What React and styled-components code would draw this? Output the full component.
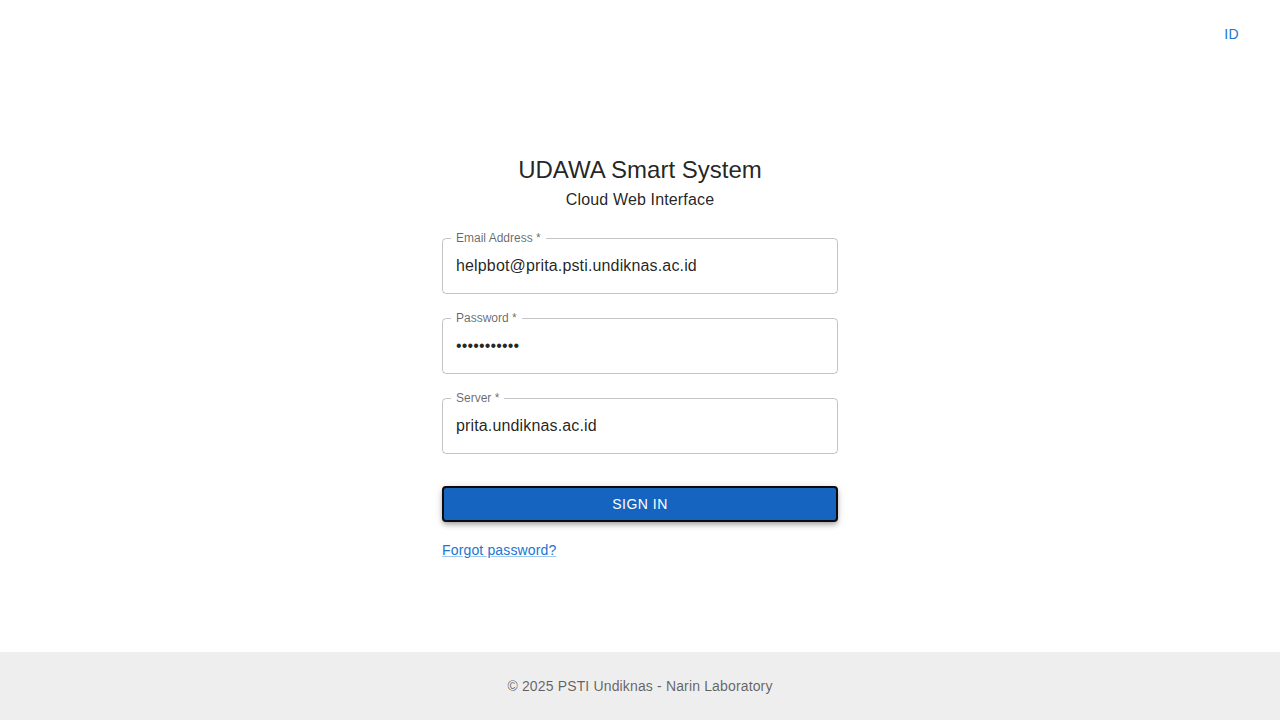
import React from "react"
import styled, { createGlobalStyle } from "styled-components"

const GlobalStyle = createGlobalStyle`
  html, body {
    margin: 0;
    padding: 0;
    background: #fff;
    font-family: "Liberation Sans", Arial, sans-serif;
    color: rgba(0, 0, 0, 0.87);
  }
  * {
    box-sizing: border-box;
  }
`

const Page = styled.div`
  min-height: 100vh;
  display: flex;
  flex-direction: column;
`

const Header = styled.header`
  height: 68px;
  display: flex;
  justify-content: flex-end;
  align-items: flex-start;
  padding: 24px 41px 0 0;
`

const LangButton = styled.button`
  border: none;
  background: none;
  padding: 0;
  font-family: inherit;
  font-size: 14px;
  line-height: 20px;
  letter-spacing: 0.4px;
  color: #1976d2;
  cursor: pointer;
`

const Main = styled.main`
  flex: 1;
  display: flex;
  justify-content: center;
  padding-top: 86px;
`

const Card = styled.div`
  width: 396px;
  display: flex;
  flex-direction: column;
`

const Title = styled.h1`
  margin: 0;
  font-size: 24px;
  font-weight: 400;
  line-height: 32px;
  text-align: center;
`

const SubTitle = styled.p`
  margin: 2px 0 20px;
  font-size: 16px;
  line-height: 24px;
  letter-spacing: 0.15px;
  text-align: center;
`

const Form = styled.form`
  display: flex;
  flex-direction: column;
  gap: 18px;
`

const Field = styled.fieldset`
  margin: 0;
  padding: 0 13px 5px;
  border: 1px solid rgba(0, 0, 0, 0.23);
  border-radius: 4px;
  min-width: 0;

  legend {
    margin-left: -5px;
    padding: 0 5px;
    font-size: 12px;
    line-height: 12px;
    color: rgba(0, 0, 0, 0.6);
  }

  input {
    display: block;
    width: 100%;
    height: 44px;
    border: none;
    outline: none;
    padding: 0;
    background: transparent;
    font-family: inherit;
    font-size: 16px;
    letter-spacing: 0.15px;
    color: rgba(0, 0, 0, 0.87);
  }
`

const SignIn = styled.button`
  margin-top: 14px;
  height: 36px;
  width: 100%;
  border: 2px solid #0b0b0b;
  border-radius: 4px;
  background: #1565c0;
  color: #fff;
  font-family: inherit;
  font-size: 14px;
  font-weight: 500;
  letter-spacing: 0.5px;
  text-transform: uppercase;
  box-shadow: 0 2px 4px -1px rgba(0, 0, 0, 0.2), 0 4px 5px 0 rgba(0, 0, 0, 0.14),
    0 1px 10px 0 rgba(0, 0, 0, 0.12);
  cursor: pointer;
`

const Forgot = styled.a`
  align-self: flex-start;
  margin-top: 18px;
  font-size: 14px;
  line-height: 20px;
  letter-spacing: 0.15px;
  color: #1976d2;
  text-decoration: underline;
  text-decoration-color: rgba(25, 118, 210, 0.4);
  cursor: pointer;
`

const Footer = styled.footer`
  height: 68px;
  background: #eeeeee;
  display: flex;
  align-items: center;
  justify-content: center;
  font-size: 14px;
  letter-spacing: 0.15px;
  color: rgba(0, 0, 0, 0.6);
`

const OutlinedField = ({ label, type = "text", value }) => (
  <Field>
    <legend>{label} *</legend>
    <input type={type} defaultValue={value} />
  </Field>
)

const App = () => {
  return (
    <Page>
      <GlobalStyle />
      <Header>
        <LangButton>ID</LangButton>
      </Header>
      <Main>
        <Card>
          <Title>UDAWA Smart System</Title>
          <SubTitle>Cloud Web Interface</SubTitle>
          <Form onSubmit={(e) => e.preventDefault()}>
            <OutlinedField label="Email Address" value="helpbot@prita.psti.undiknas.ac.id" />
            <OutlinedField label="Password" type="password" value="abcdefghijk" />
            <OutlinedField label="Server" value="prita.undiknas.ac.id" />
            <SignIn type="submit">Sign In</SignIn>
          </Form>
          <Forgot>Forgot password?</Forgot>
        </Card>
      </Main>
      <Footer>© 2025 PSTI Undiknas - Narin Laboratory</Footer>
    </Page>
  )
}

export default App
